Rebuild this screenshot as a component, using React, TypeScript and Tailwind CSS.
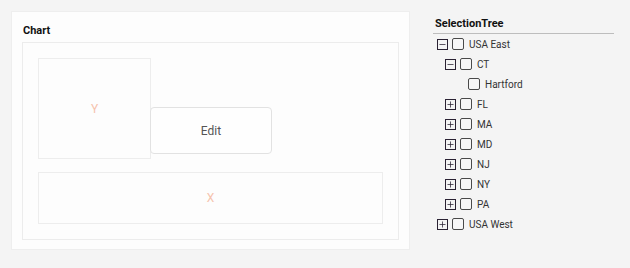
import { Minus, Plus } from "lucide-react";

type Node = {
  label: string;
  level: number;
  expander?: "open" | "closed";
};

const nodes: Node[] = [
  { label: "USA East", level: 0, expander: "open" },
  { label: "CT", level: 1, expander: "open" },
  { label: "Hartford", level: 2 },
  { label: "FL", level: 1, expander: "closed" },
  { label: "MA", level: 1, expander: "closed" },
  { label: "MD", level: 1, expander: "closed" },
  { label: "NJ", level: 1, expander: "closed" },
  { label: "NY", level: 1, expander: "closed" },
  { label: "PA", level: 1, expander: "closed" },
  { label: "USA West", level: 0, expander: "closed" },
];

const indent = ["pl-[4px]", "pl-[12px]", "pl-[20px]"];

function TreeRow({ node }: { node: Node }) {
  return (
    <div className={`flex h-[20px] items-center ${indent[node.level]}`}>
      <span className="flex w-[15px] shrink-0 items-center">
        {node.expander && (
          <span className="flex h-[11px] w-[11px] items-center justify-center border border-[#2a2233] bg-[#f4f4f4] text-[#2a2233]">
            {node.expander === "open" ? (
              <Minus size={9} strokeWidth={2} />
            ) : (
              <Plus size={9} strokeWidth={2} />
            )}
          </span>
        )}
      </span>
      <span className="h-[12px] w-[12px] shrink-0 rounded-[2px] border border-[#4a4a4a] bg-[#f7f7f7]" />
      <span className="ml-[5px] text-[10px] text-[#333]">{node.label}</span>
    </div>
  );
}

export default function App() {
  return (
    <div className="flex h-[268px] w-[630px] items-start bg-[#f4f4f4] pl-[11px] pt-[11px] font-['Roboto',sans-serif]">
      {/* chart card */}
      <div className="flex h-[239px] w-[399px] flex-col border border-[#eeeeee] bg-[#fdfdfd] px-[10px] pb-[10px]">
        <div className="pl-[1px] pt-[12px] pb-[5px] text-[11px] font-bold leading-[13px] text-[#111]">
          Chart
        </div>
        <div className="flex flex-1 flex-col border border-[#ececec] p-[15px]">
          <div className="flex items-start">
            <div className="flex h-[101px] w-[113px] items-center justify-center border border-[#ededed] text-[12px] text-[#f6c3ad]">
              Y
            </div>
            <div className="-ml-px mt-[49px] flex h-[47px] w-[122px] items-center justify-center rounded-[4px] border border-[#e2e2e2] bg-[#fefefe] text-[12px] text-[#555]">
              Edit
            </div>
          </div>
          <div className="mt-[13px] flex h-[52px] items-center justify-center border border-[#ededed] text-[12px] text-[#f6c3ad]">
            X
          </div>
        </div>
      </div>

      {/* selection tree */}
      <div className="ml-[23px] w-[181px] pt-[5px]">
        <div className="pl-[2px] text-[11px] font-bold leading-[16px] text-[#111]">
          SelectionTree
        </div>
        <div className="mt-[1px] h-px bg-[#bdbdbd]" />
        <div>
          {nodes.map((n) => (
            <TreeRow key={n.label} node={n} />
          ))}
        </div>
      </div>
    </div>
  );
}
